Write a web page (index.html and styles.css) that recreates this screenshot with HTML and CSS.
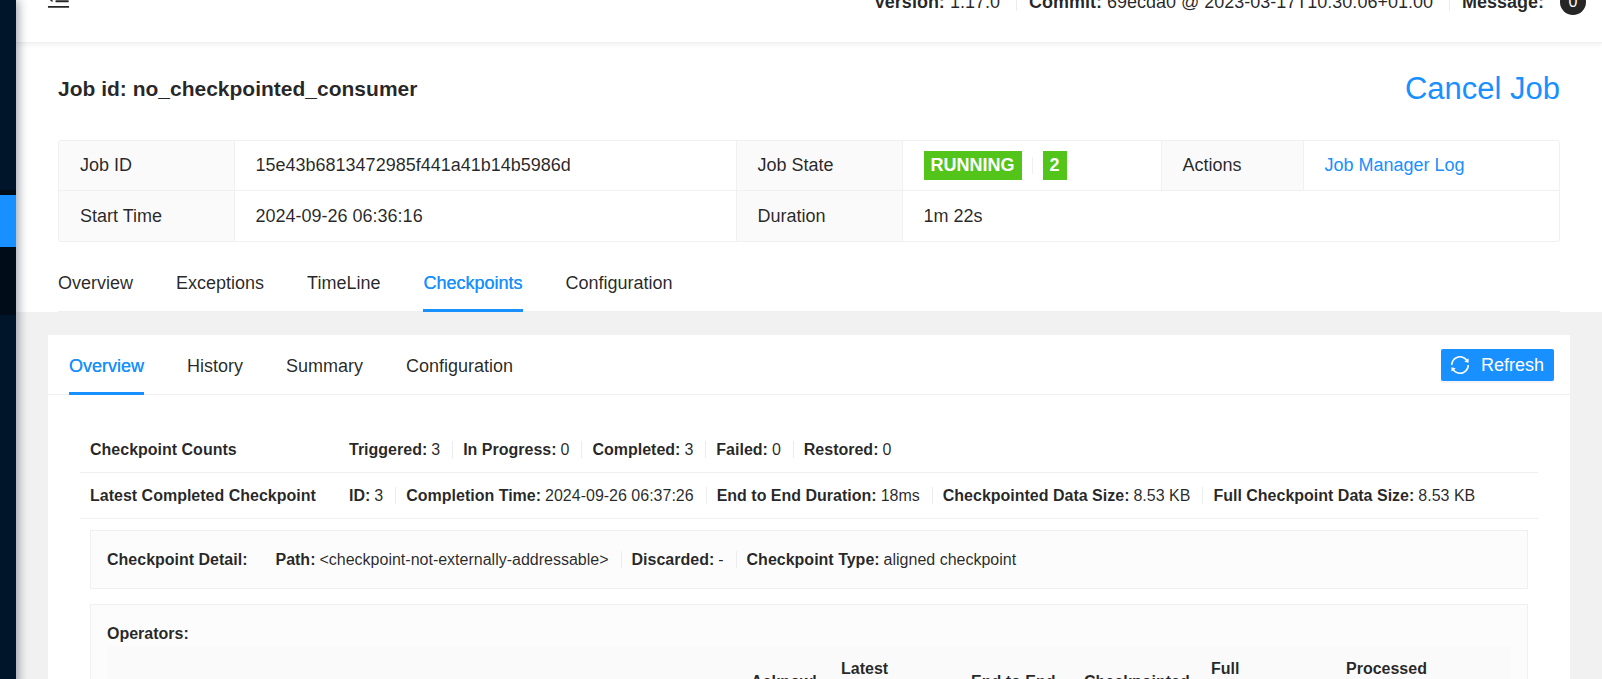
FILE: index.html
```html
<!DOCTYPE html>
<html lang="en">
<head>
<meta charset="utf-8">
<title>Job: no_checkpointed_consumer</title>
<link rel="stylesheet" href="styles.css">
</head>
<body>
<div class="app">
  <aside class="sider">
    <div class="sider-group">
      <a class="sider-item" href="#running" aria-label="Running Jobs"></a>
      <div class="sider-rest"></div>
    </div>
  </aside>
  <div class="main">
    <header class="topbar">
      <button class="fold" type="button" aria-label="Collapse menu">
        <svg viewBox="0 0 1024 1024" width="27" height="27" fill="currentColor" aria-hidden="true"><path d="M408 442h480c4.400 0 8-3.600 8-8v-56c0-4.400-3.600-8-8-8H408c-4.400 0-8 3.600-8 8v56c0 4.400 3.600 8 8 8zm-8 204c0 4.400 3.600 8 8 8h480c4.400 0 8-3.600 8-8v-56c0-4.400-3.600-8-8-8H408c-4.400 0-8 3.600-8 8v56zm504-486H120c-4.400 0-8 3.600-8 8v56c0 4.400 3.600 8 8 8h784c4.400 0 8-3.600 8-8v-56c0-4.400-3.600-8-8-8zm0 632H120c-4.400 0-8 3.600-8 8v56c0 4.400 3.600 8 8 8h784c4.400 0 8-3.600 8-8v-56c0-4.400-3.600-8-8-8zM115.400 518.900L271.700 642c5.800 4.600 14.400.5 14.400-6.900V388.900c0-7.400-8.500-11.500-14.400-6.900L115.400 505.100a8.740 8.740 0 000 13.800z"/></svg>
      </button>
      <div class="facts build">
        <span><strong>Version:</strong> 1.17.0</span>
        <span><strong>Commit:</strong> 69ecda0 @ 2023-03-17T10:30:06+01:00</span>
        <span><strong>Message:</strong></span>
        <span class="count">0</span>
      </div>
    </header>

    <section class="job">
      <div class="job-head">
        <h1>Job id: no_checkpointed_consumer</h1>
        <a class="cancel" href="#cancel">Cancel Job</a>
      </div>
      <div class="frame">
        <table class="info">
          <colgroup><col class="c1"><col class="c2"><col class="c3"><col class="c4"><col class="c5"><col class="c6"></colgroup>
          <tr>
            <th scope="row">Job ID</th><td>15e43b6813472985f441a41b14b5986d</td>
            <th scope="row">Job State</th>
            <td><div class="state"><span class="tag">RUNNING</span><i class="bar"></i><span class="tag">2</span></div></td>
            <th scope="row">Actions</th><td><a href="#log">Job Manager Log</a></td>
          </tr>
          <tr>
            <th scope="row">Start Time</th><td>2024-09-26 06:36:16</td>
            <th scope="row">Duration</th><td colspan="3">1m 22s</td>
          </tr>
        </table>
      </div>
      <nav class="tabs">
        <a href="#overview">Overview</a>
        <a href="#exceptions">Exceptions</a>
        <a href="#timeline">TimeLine</a>
        <a class="active" href="#checkpoints">Checkpoints</a>
        <a href="#configuration">Configuration</a>
      </nav>
    </section>

    <main class="content">
      <div class="card">
        <div class="card-head">
          <nav class="tabs inner">
            <a class="active" href="#cp-overview">Overview</a>
            <a href="#cp-history">History</a>
            <a href="#cp-summary">Summary</a>
            <a href="#cp-configuration">Configuration</a>
          </nav>
          <button class="refresh" type="button">
            <svg viewBox="0 0 1024 1024" width="22" height="22" fill="currentColor" aria-hidden="true"><path d="M168 504.200c1-43.700 10-86.100 26.900-126 17.300-41 42.100-77.700 73.700-109.400S337 212.300 378 195c42.400-17.900 87.400-27 133.900-27s91.500 9.100 133.800 27A341.500 341.500 0 01755 268.800c9.900 9.900 19.200 20.400 27.800 31.400l-60.200 47a8 8 0 003 14.100l175.700 43c5 1.200 9.900-2.600 9.900-7.700l.8-180.900c0-6.700-7.700-10.500-12.900-6.300l-56.400 44.100C765.800 155.100 646.200 92 511.800 92 282.700 92 96.300 275.600 92 503.800a8 8 0 008 8.200h60c4.400 0 7.900-3.500 8-7.800zm756 7.800h-60c-4.400 0-7.900 3.500-8 7.800-1 43.700-10 86.100-26.900 126-17.300 41-42.100 77.800-73.700 109.400A342.450 342.450 0 01512.100 856a342.240 342.240 0 01-243.200-100.800c-9.900-9.900-19.200-20.400-27.800-31.400l60.200-47a8 8 0 00-3-14.100l-175.700-43c-5-1.200-9.900 2.600-9.900 7.700l-.7 181c0 6.700 7.700 10.500 12.900 6.300l56.400-44.100C258.200 868.900 377.800 932 512.200 932c229.200 0 415.500-183.700 419.800-411.800a8 8 0 00-8-8.200z"/></svg>
            Refresh
          </button>
        </div>
        <div class="card-body">
          <div class="row">
            <strong class="label">Checkpoint Counts</strong>
            <div class="facts">
              <span><strong>Triggered:</strong> 3</span>
              <span><strong>In Progress:</strong> 0</span>
              <span><strong>Completed:</strong> 3</span>
              <span><strong>Failed:</strong> 0</span>
              <span><strong>Restored:</strong> 0</span>
            </div>
          </div>
          <div class="row">
            <strong class="label">Latest Completed Checkpoint</strong>
            <div class="facts">
              <span><strong>ID:</strong> 3</span>
              <span><strong>Completion Time:</strong> 2024-09-26 06:37:26</span>
              <span><strong>End to End Duration:</strong> 18ms</span>
              <span><strong>Checkpointed Data Size:</strong> 8.53 KB</span>
              <span><strong>Full Checkpoint Data Size:</strong> 8.53 KB</span>
            </div>
          </div>
          <div class="panels">
            <div class="panel detail">
              <strong>Checkpoint Detail:</strong>
              <div class="facts">
                <span><strong>Path:</strong> &lt;checkpoint-not-externally-addressable&gt;</span>
                <span><strong>Discarded:</strong> -</span>
                <span><strong>Checkpoint Type:</strong> aligned checkpoint</span>
              </div>
            </div>
            <div class="panel">
              <strong>Operators:</strong>
              <table class="ops">
                <colgroup><col><col class="o2"><col class="o3"><col class="o4"><col class="o5"><col class="o6"><col class="o7"></colgroup>
                <thead>
                  <tr>
                    <th scope="col">Name</th>
                    <th scope="col">Acknowl<wbr>edged</th>
                    <th scope="col">Latest<br>Acknowledg<br>ment</th>
                    <th scope="col">End to End Duration</th>
                    <th scope="col">Checkpointed Data Size</th>
                    <th scope="col">Full<br>Checkpoint<br>Data Size</th>
                    <th scope="col">Processed<br>(persisted)<br>in-flight data</th>
                  </tr>
                </thead>
              </table>
            </div>
          </div>
        </div>
      </div>
    </main>
  </div>
</div>
</body>
</html>
```
FILE: styles.css
```css
* { box-sizing: border-box; }

body {
  margin: 0;
  height: 100vh;
  overflow: hidden;
  background: #f1f1f1;
  color: rgba(0, 0, 0, .85);
  font: 18px/28px "Liberation Sans", Arial, sans-serif;
}

a { color: #1890ff; text-decoration: none; }

.app { display: flex; min-height: 100vh; }

/* collapsed dark sider */
.sider {
  position: relative;
  z-index: 2;
  flex: 0 0 16px;
  padding-top: 190px;
  background: #001529;
  box-shadow: 3px 0 10px rgba(0, 21, 41, .35);
}
.sider-group { padding-top: 5px; background: #000c17; }
.sider-item { display: block; height: 52px; background: #1890ff; }
.sider-rest { height: 68px; }

.main { flex: 1; min-width: 0; }

/* top bar, scrolled halfway out of view */
.topbar {
  position: relative;
  z-index: 1;
  display: flex;
  align-items: center;
  justify-content: space-between;
  height: 84px;
  margin-top: -41px;
  padding: 0 16px 0 29px;
  background: #fff;
  border-bottom: 1px solid #f0f0f0;
  box-shadow: 0 1px 6px rgba(0, 21, 41, .08);
}
.fold { display: flex; padding: 0 0 4px; border: 0; background: none; color: inherit; }

.facts { display: flex; align-items: center; }
.facts > span { display: flex; align-items: center; gap: 4px; white-space: nowrap; }
.facts > span + span::before {
  content: "";
  width: 1px;
  height: 17px;
  margin: 0 6px 0 12px;
  background: #ececec;
}
.build { padding-top: 3px; }
.build > span { gap: 5px; }
.build > span + span::before { margin: 0 7px 0 16px; }
.build > .count {
  justify-content: center;
  width: 26px;
  height: 26px;
  margin-left: 16px;
  border-radius: 50%;
  background: #262626;
  color: #fff;
  font-size: 16px;
}
.build > .count::before { display: none; }

.job { padding: 22px 42px 0; background: #fff; }
.job-head { display: flex; align-items: center; justify-content: space-between; height: 48px; }
.job-head h1 { margin: 0; font-size: 21px; }
.cancel { font-size: 31px; }

.frame { margin-top: 27px; border: 1px solid #f0f0f0; border-radius: 3px; overflow: hidden; }
.info { width: 100%; table-layout: fixed; border-collapse: collapse; }
.info th, .info td { height: 49px; padding: 0 21px; text-align: left; font-weight: 400; }
.info th { background: #fafafa; }
.info th + td, .info td + th { border-left: 1px solid #f0f0f0; }
.info th { border-right: 1px solid #f0f0f0; }
.info tr + tr > * { height: 51px; border-top: 1px solid #f0f0f0; }
.c1 { width: 175px; }
.c3 { width: 166px; }
.c4 { width: 259px; }
.c5 { width: 142px; }
.c6 { width: 256px; }
.state { display: flex; align-items: center; gap: 10px; }
.tag { padding: 0 7px; background: #52c41a; color: #fff; font-weight: 700; line-height: 29px; }
.bar { width: 1px; height: 17px; background: #f0f0f0; }

.tabs { display: flex; gap: 43px; }
.job > .tabs { margin-top: 11px; border-bottom: 1px solid #f0f0f0; }
.tabs a {
  margin-bottom: -1px;
  padding: 16px 0 12px;
  border-bottom: 3px solid transparent;
  color: inherit;
}
.tabs .active { border-color: #1890ff; color: #1890ff; text-shadow: 0 0 .25px currentcolor; }

.content { padding: 23px 32px; }
.card { background: #fff; }
.card-head {
  display: flex;
  align-items: center;
  justify-content: space-between;
  padding: 0 16px 0 21px;
  border-bottom: 1px solid #f0f0f0;
}
.card-head .tabs a { padding: 17px 0 12px; }
.refresh {
  display: flex;
  align-items: center;
  gap: 10px;
  height: 32px;
  padding: 0 10px 0 8px;
  border: 0;
  border-radius: 2px;
  background: #1890ff;
  box-shadow: 0 2px 0 rgba(0, 0, 0, .045);
  color: #fff;
  font: inherit;
}

.card-body { padding: 32px; font-size: 16px; line-height: 25px; }
.row {
  display: grid;
  grid-template-columns: 259px 1fr;
  align-items: center;
  padding: 10px;
  border-bottom: 1px solid #f0f0f0;
}
.panels { display: grid; gap: 15px; padding: 11px 10px; }
.panel { padding: 16px; background: #fcfcfc; border: 1px solid #f0f0f0; }
.detail { display: flex; gap: 28px; }

.ops { width: 100%; table-layout: fixed; border-collapse: collapse; background: #fafafa; }
.ops th { padding: 10px; text-align: left; }
.o2 { width: 90px; }
.o3 { width: 130px; }
.o4 { width: 113px; }
.o5 { width: 127px; }
.o6 { width: 135px; }
.o7 { width: 175px; }
```
